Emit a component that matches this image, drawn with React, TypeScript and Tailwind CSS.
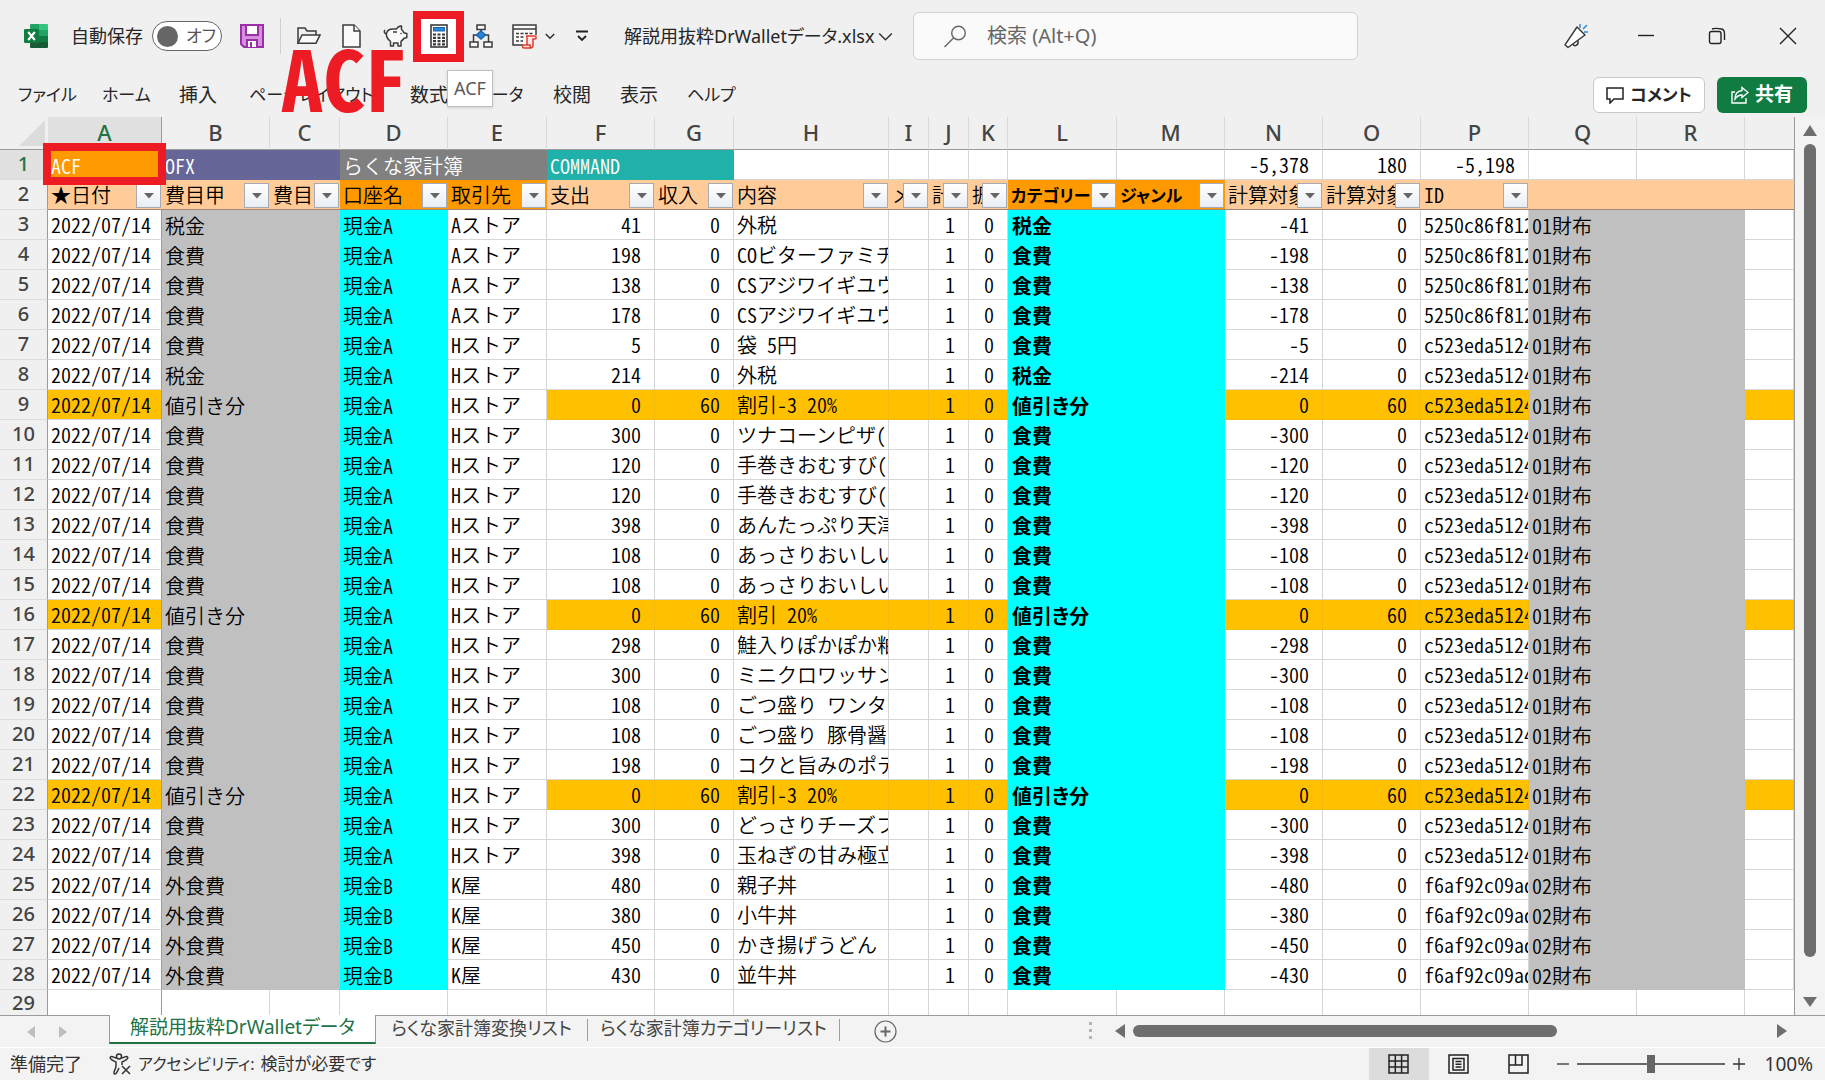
import React from 'react';

type Row = {
  category: string;
  account: string;
  shop: string;
  out: string;
  income: string;
  content: string;
  net: string;
  id: string;
  wallet: string;
  discount?: boolean;
};

const row = (category: string, account: string, shop: string, out: string, content: string, id: string, wallet: string): Row => ({
  category, account, shop, out, income: '0', content, net: `-${out}`, id, wallet
});

const discountRow = (content: string): Row => ({
  category: '値引き分', account: '現金A', shop: 'Hストア', out: '0', income: '60', content,
  net: '0', id: 'c523eda5124', wallet: '01財布', discount: true
});

const rows: Row[] = [
  row('税金', '現金A', 'Aストア', '41', '外税', '5250c86f812', '01財布'),
  row('食費', '現金A', 'Aストア', '198', 'COビターファミチ', '5250c86f812', '01財布'),
  row('食費', '現金A', 'Aストア', '138', 'CSアジワイギユウ', '5250c86f812', '01財布'),
  row('食費', '現金A', 'Aストア', '178', 'CSアジワイギユウ', '5250c86f812', '01財布'),
  row('食費', '現金A', 'Hストア', '5', '袋 5円', 'c523eda5124', '01財布'),
  row('税金', '現金A', 'Hストア', '214', '外税', 'c523eda5124', '01財布'),
  discountRow('割引-3 20%'),
  row('食費', '現金A', 'Hストア', '300', 'ツナコーンピザ(', 'c523eda5124', '01財布'),
  row('食費', '現金A', 'Hストア', '120', '手巻きおむすび(', 'c523eda5124', '01財布'),
  row('食費', '現金A', 'Hストア', '120', '手巻きおむすび(', 'c523eda5124', '01財布'),
  row('食費', '現金A', 'Hストア', '398', 'あんたっぷり天津', 'c523eda5124', '01財布'),
  row('食費', '現金A', 'Hストア', '108', 'あっさりおいしい', 'c523eda5124', '01財布'),
  row('食費', '現金A', 'Hストア', '108', 'あっさりおいしい', 'c523eda5124', '01財布'),
  discountRow('割引 20%'),
  row('食費', '現金A', 'Hストア', '298', '鮭入りぽかぽか粕', 'c523eda5124', '01財布'),
  row('食費', '現金A', 'Hストア', '300', 'ミニクロワッサン', 'c523eda5124', '01財布'),
  row('食費', '現金A', 'Hストア', '108', 'ごつ盛り ワンタ', 'c523eda5124', '01財布'),
  row('食費', '現金A', 'Hストア', '108', 'ごつ盛り 豚骨醤', 'c523eda5124', '01財布'),
  row('食費', '現金A', 'Hストア', '198', 'コクと旨みのポテ', 'c523eda5124', '01財布'),
  discountRow('割引-3 20%'),
  row('食費', '現金A', 'Hストア', '300', 'どっさりチーズフ', 'c523eda5124', '01財布'),
  row('食費', '現金A', 'Hストア', '398', '玉ねぎの甘み極立', 'c523eda5124', '01財布'),
  row('外食費', '現金B', 'K屋', '480', '親子丼', 'f6af92c09ad', '02財布'),
  row('外食費', '現金B', 'K屋', '380', '小牛丼', 'f6af92c09ad', '02財布'),
  row('外食費', '現金B', 'K屋', '450', 'かき揚げうどん', 'f6af92c09ad', '02財布'),
  row('外食費', '現金B', 'K屋', '430', '並牛丼', 'f6af92c09ad', '02財布')
];

const columns = [
  { name: 'A', width: 'w-[114px]' },
  { name: 'B', width: 'w-[108px]' },
  { name: 'C', width: 'w-[70px]' },
  { name: 'D', width: 'w-[108px]' },
  { name: 'E', width: 'w-[99px]' },
  { name: 'F', width: 'w-[108px]' },
  { name: 'G', width: 'w-[79px]' },
  { name: 'H', width: 'w-[155px]' },
  { name: 'I', width: 'w-[40px]' },
  { name: 'J', width: 'w-[40px]' },
  { name: 'K', width: 'w-[39px]' },
  { name: 'L', width: 'w-[109px]' },
  { name: 'M', width: 'w-[108px]' },
  { name: 'N', width: 'w-[98px]' },
  { name: 'O', width: 'w-[98px]' },
  { name: 'P', width: 'w-[108px]' },
  { name: 'Q', width: 'w-[108px]' },
  { name: 'R', width: 'w-[108px]' }
];

const filters = [
  { label: '★日付' },
  { label: '費目甲' },
  { label: '費目乙' },
  { label: '口座名', strong: true },
  { label: '取引先', strong: true },
  { label: '支出' },
  { label: '収入' },
  { label: '内容' },
  { label: 'メ' },
  { label: '計' },
  { label: '振' },
  { label: 'カテゴリー', strong: true, bold: true },
  { label: 'ジャンル', strong: true, bold: true },
  { label: '計算対象' },
  { label: '計算対象' },
  { label: 'ID' }
];

const menu = [
  { label: 'ファイル', width: 'w-[84px] text-[17px]' },
  { label: 'ホーム', width: 'w-[77px] text-[17px]' },
  { label: '挿入', width: 'w-[70px]' },
  { label: 'ページレイアウト', width: 'w-[161px] text-[17px]' },
  { label: '数式', width: 'w-[66px]' },
  { label: 'データ', width: 'w-[77px] text-[17px]' },
  { label: '校閲', width: 'w-[67px]' },
  { label: '表示', width: 'w-[67px]' },
  { label: 'ヘルプ', width: 'w-[70px] text-[17px]' }
];

const ink = '#3b3b3b';

const ExcelIcon = () => (
  <svg width="24" height="24" viewBox="0 0 24 24">
    <path d="M7 0h8v6H6V1a1 1 0 0 1 1-1z" fill="#21a366" />
    <path d="M15 0h8a1 1 0 0 1 1 1v5h-9z" fill="#33c481" />
    <path d="M6 6h9v6H6z" fill="#107c41" />
    <path d="M15 6h9v6h-9z" fill="#21a366" />
    <path d="M6 12h9v6H6z" fill="#185c37" />
    <path d="M15 12h9v6h-9z" fill="#107c41" />
    <path d="M6 18h18v5a1 1 0 0 1-1 1H7a1 1 0 0 1-1-1z" fill="#185c37" />
    <rect x="0" y="5" width="15" height="14" rx="1.2" fill="#107c41" />
    <path d="M4.2 8 10.8 16M10.8 8 4.2 16" stroke="#fff" strokeWidth="2.1" />
  </svg>
);

const SaveIcon = () => (
  <svg width="24" height="24" viewBox="0 0 24 24" fill="none" stroke="#9a2fa8" strokeWidth="2">
    <path d="M1 1h22v22H4l-3-3z" fill="#d48fdd" />
    <path d="M6 1h12v10H6z" fill="#fff" />
    <path d="M7 23v-7h10v7" fill="#fff" />
    <path d="M11 18v5" />
  </svg>
);

const FolderIcon = () => (
  <svg width="24" height="24" viewBox="0 0 24 24" fill="none" stroke={ink} strokeWidth="1.5">
    <path d="M1 19V4h7l2 3h9v4" />
    <path d="M1 19.2 5 11h18l-4 8.2z" fill="#fafafa" />
  </svg>
);

const FileIcon = () => (
  <svg width="20" height="24" viewBox="0 0 20 24" fill="#fafafa" stroke={ink} strokeWidth="1.5">
    <path d="M1 1h11l6 6v16H1z" />
    <path d="M12 1v6h6" />
  </svg>
);

const PigIcon = () => (
  <svg width="25" height="24" viewBox="0 0 25 24" fill="#fafafa" stroke={ink} strokeWidth="1.5" strokeLinejoin="round">
    <path d="M3.500 9.500C4 6.500 6.500 5 10 5h3.500c1-2 3-3 5-3v3.500c1.200 1 2 2 2.300 3.200l3 .8v4l-3 1c-.8 1.200-1.800 2-2.800 2.800V22h-3v-3h-4.500v3h-3v-4.500c-2.500-2-4.500-4.500-4-8z" />
    <path d="M3.500 10C1.500 9.500.500 7.500 2 6M10 8h4" fill="none" />
    <circle cx="18" cy="9.500" r=".8" fill={ink} stroke="none" />
  </svg>
);

const CalculatorIcon = () => (
  <svg width="18" height="24" viewBox="0 0 18 24" fill="none">
    <rect x="1" y="1" width="16" height="22" fill="#fff" stroke={ink} strokeWidth="1.600" />
    <rect x="3.500" y="3.500" width="11" height="3.500" fill="#2b88d8" stroke="#1565b0" />
    <path d="M3 10.500h12M3 13.800h12M3 17.100h12M3 20.400h12" stroke={ink} strokeWidth="2.200" strokeDasharray="3 1.500" />
  </svg>
);

const FlowIcon = () => (
  <svg width="24" height="24" viewBox="0 0 24 24" fill="#fafafa" stroke={ink} strokeWidth="1.500">
    <path d="M12 5v3M8 11H4.500v7M16 11h3.500v7" fill="none" />
    <rect x="8" y="1" width="8" height="4.500" />
    <path d="m12 7 4.500 4L12 15l-4.500-4z" fill="#2b88d8" stroke="#1565b0" />
    <rect x="1" y="18" width="8" height="5" />
    <rect x="15" y="18" width="8" height="5" />
  </svg>
);

const MacroIcon = () => (
  <svg width="26" height="26" viewBox="0 0 26 26" fill="none" stroke={ink} strokeWidth="1.500">
    <path d="M11 22H1V2h23v10" fill="#fafafa" />
    <path d="M1 6h23" />
    <path d="M4 10.500h17M4 14h9M4 18h7" strokeDasharray="3 1.500" />
    <path d="M14 13h9c1.500 0 1.500 3 0 3h-2v6c0 3-2 3-3 3h-6c-2 0-2-3 0-3h3v-7c0-1-.5-2-1-2zM12 22h6c0 2 1 3 2 3" fill="#fde7e7" stroke="#e03c31" />
  </svg>
);

const Chevron = ({ size = 10 }: { size?: number }) => (
  <svg width={size} height={size} viewBox="0 0 10 10" fill="none" stroke="#333" strokeWidth={size > 12 ? 1 : 1.6}>
    <path d="m.8 3 4.200 4.200L9.200 3" />
  </svg>
);

const FilterButton = ({ label }: { label: string }) => (
  <button
    aria-label={label}
    className="absolute right-px bottom-px flex h-[25px] w-[25px] items-center justify-center border border-[#a6abb3] bg-linear-to-b from-white to-[#e9edf3]"
  >
    <svg width="10" height="6" viewBox="0 0 10 6"><path d="M0 0h10L5 5.500z" fill="#666" /></svg>
  </button>
);

const TitleBar: React.FC = () => (
  <header className="flex h-18 items-center pl-6 text-[18px] text-[#262626]">
    <ExcelIcon />
    <label htmlFor="autosave" className="ml-[23px] w-[81px] whitespace-nowrap">自動保存</label>
    <span className="relative flex h-[30px] w-[70px] items-center rounded-full border border-[#666] bg-white">
      <input id="autosave" type="checkbox" className="ml-1 h-[21px] w-[21px] appearance-none rounded-full bg-[#666]" />
      <span className="ml-2 text-[17px] text-[#555] [font-feature-settings:'palt']">オフ</span>
    </span>
    <button aria-label="上書き保存" className="ml-[18px]"><SaveIcon /></button>
    <span className="mx-4 h-9 w-px bg-[#d0d0d0]" />
    <button aria-label="開く"><FolderIcon /></button>
    <button aria-label="新規作成" className="ml-[21px]"><FileIcon /></button>
    <button aria-label="家計簿" className="ml-[21px]"><PigIcon /></button>
    <button aria-label="計算" className="ml-[5px] flex h-[51px] w-[51px] items-center justify-center border-8 border-[#ed1c24] bg-white">
      <CalculatorIcon />
    </button>
    <button aria-label="組織図" className="ml-[5px]"><FlowIcon /></button>
    <button aria-label="マクロ" className="ml-[19px] flex items-center gap-[7px]"><MacroIcon /><Chevron /></button>
    <button aria-label="カスタマイズ" className="ml-[21px]">
      <svg width="12" height="12" viewBox="0 0 12 12" fill="none" stroke="#222" strokeWidth="1.800"><path d="M0 1.500h12M2 6l4 4 4-4" /></svg>
    </button>
    <button className="ml-9 flex items-center gap-2 whitespace-nowrap">
      <span className="w-[246px] text-left [font-feature-settings:'palt']">解説用抜粋DrWalletデータ.xlsx</span>
      <Chevron size={15} />
    </button>
    <label className="ml-5 flex h-12 w-[445px] items-center rounded-md border border-[#d1d1d1] bg-[#fafafa] pl-[30px]">
      <svg width="23" height="23" viewBox="0 0 23 23" fill="none" stroke="#666" strokeWidth="1.400">
        <circle cx="14.500" cy="8" r="6.800" /><path d="m9.500 13-9 9" />
      </svg>
      <input aria-label="検索" placeholder="検索 (Alt+Q)" className="ml-5 w-80 bg-transparent text-[20px] outline-none placeholder:text-[#666]" />
    </label>
    <div className="ml-auto flex items-center pr-7">
      <button aria-label="新機能">
        <svg width="25" height="25" viewBox="0 0 25 25" fill="#fff" stroke={ink} strokeWidth="1.500" strokeLinejoin="round">
          <path d="m13 3 8 8L4 23.500l-3-2.700z" /><path d="M9 20c1 3 6 2 5-3.500" fill="none" />
          <path d="M16 0v4M23 1l-4 4M20 8h4" stroke="#2b88d8" />
        </svg>
      </button>
      <button aria-label="最小化" className="ml-12">
        <svg width="18" height="18" viewBox="0 0 18 18" stroke="#222" strokeWidth="1.400"><path d="M1 8.500h16" /></svg>
      </button>
      <button aria-label="元に戻す" className="ml-[53px]">
        <svg width="18" height="18" viewBox="0 0 18 18" fill="none" stroke="#222" strokeWidth="1.400">
          <rect x="1.500" y="4.500" width="11.500" height="12" rx="2" /><path d="M4 2c3-1 7-.5 9.500 0 2.500.5 3 3 3 5v6" />
        </svg>
      </button>
      <button aria-label="閉じる" className="ml-[53px]">
        <svg width="18" height="18" viewBox="0 0 18 18" stroke="#222" strokeWidth="1.400"><path d="m1 1 16 16M17 1 1 17" /></svg>
      </button>
    </div>
  </header>
);

const MenuBar: React.FC = () => (
  <nav className="flex h-[45px] items-center pl-[18px] text-[19px] text-[#262626]">
    {menu.map(item => (
      <button key={item.label} className={`${item.width} text-left leading-7 whitespace-nowrap [font-feature-settings:'palt']`}>
        {item.label}
      </button>
    ))}
    <div className="ml-auto flex gap-3 pr-[18px] font-bold">
      <button className="flex h-9 w-[112px] items-center justify-center gap-[6px] rounded-md border border-[#c8c8c8] bg-white whitespace-nowrap">
        <svg width="18" height="18" viewBox="0 0 18 18" fill="none" stroke="#222" strokeWidth="1.500"><path d="M1 2h16v11H8l-4 4v-4H1z" /></svg>
        <span className="text-[17px] [font-feature-settings:'palt']">コメント</span>
      </button>
      <button className="flex h-9 w-[90px] items-center justify-center gap-[6px] rounded-md bg-[#107c41] whitespace-nowrap text-white">
        <svg width="18" height="18" viewBox="0 0 18 18" fill="none" stroke="#fff" strokeWidth="1.400">
          <path d="M4 6H1v11h14v-5" /><path d="M11 1.500 17 6.500l-6 5V9c-3 0-5 1-7 4 0-5 3-8 7-8.500z" />
        </svg>
        共有
      </button>
    </div>
  </nav>
);

const grid = 'border-r border-b border-[#d6d6d6]';
const numeric = `${grid} pr-[13px] text-right`;

const RowHead = ({ n, active }: { n: number; active?: boolean }) => (
  <th
    scope="row"
    className={`border-r border-b border-r-[#9b9b9b] border-b-[#dcdcdc] text-center align-top font-['Noto_Sans',sans-serif] text-[20px] leading-[27px] font-medium ${
      active ? 'bg-[#e1e1e1] text-[#217346]' : 'bg-[#f0f0f0] text-[#444]'
    }`}
  >
    {n}
  </th>
);

const DataRow = ({ data, n }: { data: Row; n: number }) => {
  const gold = data.discount ? 'bg-[#ffc000] border-[#f3bb10]' : 'bg-white';
  return (
    <tr className="h-[30px]">
      <RowHead n={n} />
      <td className={`border-r border-b border-r-[#9b9b9b] border-b-[#d6d6d6] pl-[3px] ${data.discount ? 'bg-[#ffc000]' : 'bg-white'}`}>2022/07/14</td>
      <td className="bg-[#c0c0c0] pl-[3px]">{data.category}</td>
      <td className="bg-[#c0c0c0]" />
      <td className="bg-[#00ffff] pl-[3px]">{data.account}</td>
      <td className={`${grid} bg-white pl-[3px]`}>{data.shop}</td>
      <td className={`${numeric} ${gold}`}>{data.out}</td>
      <td className={`${numeric} ${gold}`}>{data.income}</td>
      <td className={`${grid} ${gold} pl-[3px]`}>{data.content}</td>
      <td className={`${grid} ${gold}`} />
      <td className={`${numeric} ${gold}`}>1</td>
      <td className={`${numeric} ${gold}`}>0</td>
      <td className="bg-[#00ffff] pl-1 font-bold [font-feature-settings:'palt']">{data.category.replace('外', '')}</td>
      <td className="bg-[#00ffff]" />
      <td className={`${numeric} ${gold}`}>{data.net}</td>
      <td className={`${numeric} ${gold}`}>{data.income}</td>
      <td className={`${grid} ${gold} pl-[3px]`}>{data.id}</td>
      <td className="bg-[#c0c0c0] pl-[3px]">{data.wallet}</td>
      <td className="bg-[#c0c0c0]" />
      <td className={`${grid} ${gold}`} />
    </tr>
  );
};

const Sheet: React.FC = () => (
  <main className="relative flex">
    <table className="w-full min-w-0 flex-1 table-fixed border-separate border-spacing-0 border-r border-[#9b9b9b] font-['Noto_Sans_CJK_JP',sans-serif] text-[20px] leading-[29px] font-[350] text-black [font-feature-settings:'hwid'] [&_td]:overflow-hidden [&_td]:whitespace-nowrap [&_th]:p-0">
      <colgroup>
        <col className="w-12" />
        {columns.map(col => <col key={col.name} className={col.width} />)}
        <col />
      </colgroup>
      <thead className="font-['Noto_Sans','Open_Sans',sans-serif] text-[22px] leading-[30px] text-[#444] [font-feature-settings:normal]">
        <tr className="h-[33px]">
          <th className="border-b border-[#9b9b9b]">
            <svg width="26" height="26" viewBox="0 0 26 26" className="ml-[19px]"><path d="M26 0v26H0z" fill="#dcdcdc" /></svg>
          </th>
          {columns.map(col => (
            <th
              key={col.name}
              scope="col"
              className={`border-r border-b border-b-[#9b9b9b] align-top font-medium ${
                col.name === 'A' ? 'border-r-[#9b9b9b] bg-[#e1e1e1] text-[#217346]' : 'border-r-[#d9d9d9]'
              }`}
            >
              {col.name}
            </th>
          ))}
          <th className="border-b border-[#9b9b9b]" />
        </tr>
      </thead>
      <tbody>
        <tr className="h-[30px] bg-white text-white">
          <RowHead n={1} active />
          <td className="bg-[#ff9900] pl-[3px]">ACF</td>
          <td colSpan={2} className="bg-[#666699] pl-[3px]">OFX</td>
          <td colSpan={2} className="bg-[#808080] pl-[3px]">らくな家計簿</td>
          <td colSpan={2} className="bg-[#20b2aa] pl-[3px]">COMMAND</td>
          {['H', 'I', 'J', 'K', 'L', 'M'].map(name => <td key={name} className={grid} />)}
          <td className={`${numeric} text-black`}>-5,378</td>
          <td className={`${numeric} text-black`}>180</td>
          <td className={`${numeric} text-black`}>-5,198</td>
          <td className={grid} />
          <td className={grid} />
          <td className={grid} />
        </tr>
        <tr className="h-[30px] bg-[#ffcc99]">
          <RowHead n={2} />
          {filters.map((filter, i) => (
            <td
              key={i}
              className={`relative border-b border-[#a08a75] pl-[3px] ${filter.strong ? 'bg-[#ff9900]' : ''} ${
                filter.bold ? "text-[17px] font-bold [font-feature-settings:'palt']" : ''
              }`}
            >
              {filter.label}
              <FilterButton label={`${filter.label} フィルター`} />
            </td>
          ))}
          <td colSpan={3} className="border-b border-[#a08a75]" />
        </tr>
        {rows.map((data, i) => <DataRow key={i} data={data} n={i + 3} />)}
        <tr className="h-[25px] bg-white leading-6">
          <th scope="row" className="border-r border-[#9b9b9b] bg-[#f0f0f0] text-center font-['Noto_Sans',sans-serif] font-medium text-[#444]">29</th>
          {columns.map(col => (
            <td key={col.name} className={`border-r ${col.name === 'A' ? 'border-[#9b9b9b]' : 'border-[#d6d6d6]'}`} />
          ))}
          <td />
        </tr>
      </tbody>
    </table>
    {/* vertical scroll bar */}
    <div className="flex w-[30px] flex-col items-center bg-[#f3f3f3] py-2">
      <svg width="14" height="11" viewBox="0 0 14 11"><path d="M7 0 14 11H0z" fill="#6e6e6e" /></svg>
      <div className="mt-2 mb-10 w-3 flex-1 rounded-full bg-[#6e6e6e]" />
      <svg width="14" height="10" viewBox="0 0 14 10"><path d="M0 0h14L7 10z" fill="#6e6e6e" /></svg>
    </div>
    <div className="absolute top-[26px] left-[43px] h-[42px] w-[123px] border-8 border-[#ed1c24]" />
  </main>
);

const SheetTabs: React.FC = () => (
  <div className="flex h-8 items-start border-t border-[#9b9b9b] bg-[#f3f3f3] text-[18px] text-[#444] [font-feature-settings:'palt']">
    <div className="flex h-full w-[109px] shrink-0 items-center gap-6 pl-[27px]">
      <button aria-label="前のシート"><svg width="8" height="12" viewBox="0 0 8 12"><path d="M8 0v12L0 6z" fill="#bdbdbd" /></svg></button>
      <button aria-label="次のシート"><svg width="8" height="12" viewBox="0 0 8 12"><path d="M0 0v12l8-6z" fill="#bdbdbd" /></svg></button>
    </div>
    <button className="-mt-px h-[29px] w-[267px] border-x border-b-2 border-x-[#9b9b9b] border-b-[#217346] bg-white pb-1 text-[19px] leading-6 whitespace-nowrap text-[#217346]">
      解説用抜粋DrWalletデータ
    </button>
    <button className="mt-[3px] h-[22px] w-[212px] border-r border-[#9b9b9b] pb-1 leading-[18px] whitespace-nowrap">らくな家計簿変換リスト</button>
    <button className="mt-[3px] h-[22px] w-[252px] border-r border-[#9b9b9b] pb-1 leading-[18px] whitespace-nowrap">らくな家計簿カテゴリーリスト</button>
    <button aria-label="新しいシート" className="mt-1 ml-[34px]">
      <svg width="23" height="23" viewBox="0 0 23 23" fill="none" stroke="#666"><circle cx="11.500" cy="11.500" r="10.500" strokeWidth="1.200" /><path d="M11.500 6.500v10M6.500 11.500h10" strokeWidth="2" /></svg>
    </button>
    <div className="ml-auto flex h-[29px] w-[736px] items-center">
      <svg width="4" height="17" viewBox="0 0 4 17" fill="#b5b5b5"><path d="M0 0h3v3H0zM0 7h3v3H0zM0 14h3v3H0z" /></svg>
      <svg width="10" height="14" viewBox="0 0 10 14" className="ml-[22px]"><path d="M10 0v14L0 7z" fill="#6e6e6e" /></svg>
      <div className="ml-2 h-3 w-[424px] rounded-full bg-[#6e6e6e]" />
      <svg width="10" height="14" viewBox="0 0 10 14" className="mr-[38px] ml-auto"><path d="M0 0v14l10-7z" fill="#6e6e6e" /></svg>
    </div>
  </div>
);

const StatusBar: React.FC = () => (
  <footer className="flex h-[33px] items-center border-t border-white bg-[#f3f3f3] pl-[10px] text-[18px] text-[#333]">
    <span className="w-[99px]">準備完了</span>
    <button className="flex items-center gap-[6px] whitespace-nowrap">
      <svg width="23" height="22" viewBox="0 0 23 22" fill="none" stroke="#333" strokeWidth="1.500" strokeLinejoin="round">
        <circle cx="10" cy="3.500" r="2.500" />
        <path d="M7.500 5C5 5 3 2.500 1.500 4S4 8 7 9v4c0 3-3 6-2 7.500S8 20 10 15M12.500 5c2.500 0 4.500-2.500 6-1S16 8 13 9v3" />
        <path d="m13 13 8 8M21 13l-8 8" />
      </svg>
      <span className="text-[16px] [font-feature-settings:'palt']">アクセシビリティ:</span>
      <span className="text-[17px] [font-feature-settings:'palt']">検討が必要です</span>
    </button>
    <div className="ml-auto flex h-full items-center pr-3">
      <button aria-label="標準" className="flex h-full w-[60px] items-center justify-center bg-[#dcdcdc]">
        <svg width="21" height="20" viewBox="0 0 21 20" fill="none" stroke="#222" strokeWidth="1.500"><path d="M1 1h19v18H1zM7.300 1v18M13.600 1v18M1 7h19M1 13h19" /></svg>
      </button>
      <button aria-label="ページ レイアウト" className="flex h-full w-[60px] items-center justify-center">
        <svg width="21" height="20" viewBox="0 0 21 20" fill="none" stroke="#222" strokeWidth="1.500"><path d="M1 1h19v18H1zM5 4.500h11v11.500H5zM7.500 7.500h6M7.500 10.200h6M7.500 13h6" /></svg>
      </button>
      <button aria-label="改ページ プレビュー" className="flex h-full w-[60px] items-center justify-center">
        <svg width="21" height="20" viewBox="0 0 21 20" fill="none" stroke="#222" strokeWidth="1.500"><path d="M1 1h19v18H1zM1 11h13V1M7.500 1v10" /></svg>
      </button>
      <button aria-label="縮小" className="ml-2">
        <svg width="12" height="12" viewBox="0 0 12 12" stroke="#333" strokeWidth="1.300"><path d="M0 6h12" /></svg>
      </button>
      <input
        type="range"
        aria-label="ズーム"
        defaultValue={50}
        className="mx-2 h-5 w-[148px] appearance-none bg-transparent [&::-webkit-slider-runnable-track]:h-[2px] [&::-webkit-slider-runnable-track]:bg-[#666] [&::-webkit-slider-thumb]:-mt-2 [&::-webkit-slider-thumb]:h-[18px] [&::-webkit-slider-thumb]:w-2 [&::-webkit-slider-thumb]:appearance-none [&::-webkit-slider-thumb]:bg-[#666]"
      />
      <button aria-label="拡大">
        <svg width="12" height="12" viewBox="0 0 12 12" stroke="#333" strokeWidth="1.300"><path d="M0 6h12M6 0v12" /></svg>
      </button>
      <span className="ml-5 text-[19px]">100%</span>
    </div>
  </footer>
);

const App: React.FC = () => {
  return (
    <div className="relative min-h-screen overflow-hidden bg-[#f0f0f0] font-['Noto_Sans','Noto_Sans_CJK_JP',sans-serif]">
      <TitleBar />
      <MenuBar />
      <Sheet />
      <SheetTabs />
      <StatusBar />
      <div className="absolute top-[70px] left-[447px] flex h-[37px] w-[46px] items-center justify-center border border-[#c0c0c0] bg-white text-[18px] text-[#5a5a5a] shadow-sm">
        ACF
      </div>
      <div className="pointer-events-none absolute top-8 left-[281px] font-['Noto_Sans_CJK_JP',sans-serif] text-[84px] leading-[88px] font-bold text-[#ed1c24] [font-feature-settings:'hwid']">
        ACF
      </div>
    </div>
  );
};

export default App;
